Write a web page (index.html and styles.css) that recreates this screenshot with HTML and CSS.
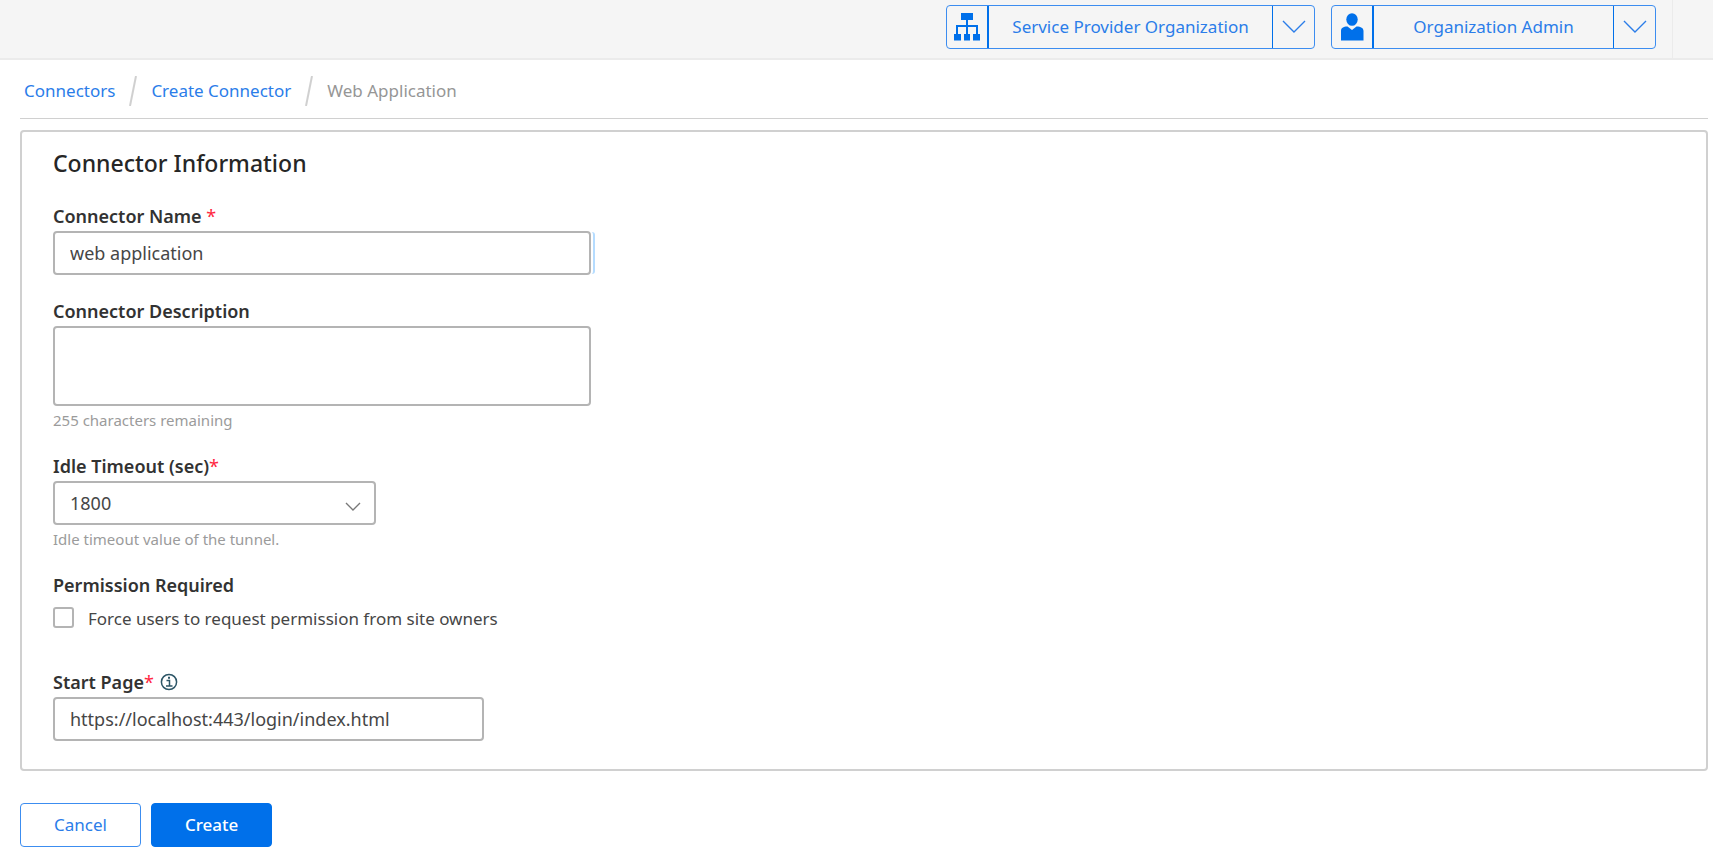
FILE: index.html
```
<!DOCTYPE html>
<html lang="en">
<head>
    <meta charset="UTF-8">
    <meta name="viewport" content="width=device-width, initial-scale=1.0">
    <title>Create Connector</title>
    <link rel="stylesheet" href="styles.css">
</head>
<body>
    <header class="topbar">
        <div class="switcher switcher-org">
            <span class="switcher-icon">
                <svg width="26" height="28" viewBox="0 0 26 28" fill="currentColor" aria-hidden="true">
                    <path d="M7 0h12v7h-5v5h10v9h2v6.500h-7v-6.500h3v-7h-8v7h2v6.500h-6v-6.500h2v-7H4v7h3v6.500H0v-6.500h2v-9h10V7H7z"/>
                </svg>
            </span>
            <button type="button" class="switcher-name">Service Provider Organization</button>
            <button type="button" class="switcher-toggle" aria-label="Change organization">
                <svg width="24" height="14" viewBox="0 0 24 14" fill="none" stroke="currentColor" stroke-width="1.4" aria-hidden="true"><path d="M1 1l11 11L23 1"/></svg>
            </button>
        </div>
        <div class="switcher switcher-role">
            <span class="switcher-icon">
                <svg width="24" height="28" viewBox="0 0 24 28" fill="currentColor" aria-hidden="true">
                    <ellipse cx="12" cy="6.500" rx="5.700" ry="6.300"/>
                    <path d="M1 27.500V18c0-3 2-4.500 6.500-4.500L12 17l4.500-3.500C21 13.500 23.500 15 23.500 18v9.500z"/>
                </svg>
            </span>
            <button type="button" class="switcher-name">Organization Admin</button>
            <button type="button" class="switcher-toggle" aria-label="Change role">
                <svg width="24" height="14" viewBox="0 0 24 14" fill="none" stroke="currentColor" stroke-width="1.4" aria-hidden="true"><path d="M1 1l11 11L23 1"/></svg>
            </button>
        </div>
        <div class="topbar-end"></div>
    </header>

    <main class="page">
        <nav class="breadcrumb" aria-label="Breadcrumb">
            <a href="#">Connectors</a>
            <svg class="slash" width="8" height="30" viewBox="0 0 8 30" aria-hidden="true"><path d="M7 0L1 30"/></svg>
            <a href="#">Create Connector</a>
            <svg class="slash" width="8" height="30" viewBox="0 0 8 30" aria-hidden="true"><path d="M7 0L1 30"/></svg>
            <span>Web Application</span>
        </nav>

        <form>
            <section class="card">
                <h2>Connector Information</h2>

                <div class="field">
                    <label for="name">Connector Name <span class="required">*</span></label>
                    <input type="text" id="name" class="control wide edited" value="web application">
                </div>

                <div class="field">
                    <label for="description">Connector Description</label>
                    <textarea id="description" class="control wide"></textarea>
                    <p class="hint">255 characters remaining</p>
                </div>

                <div class="field">
                    <label for="timeout">Idle Timeout (sec)<span class="required">*</span></label>
                    <div class="select">
                        <select id="timeout" class="control">
                            <option>1800</option>
                        </select>
                        <svg width="16" height="10" viewBox="0 0 16 10" fill="none" stroke="currentColor" stroke-width="1.4" aria-hidden="true"><path d="M1 1l7 7 7-7"/></svg>
                    </div>
                    <p class="hint">Idle timeout value of the tunnel.</p>
                </div>

                <div class="field">
                    <div class="label">Permission Required</div>
                    <div class="check">
                        <input type="checkbox" id="permission">
                        <label for="permission">Force users to request permission from site owners</label>
                    </div>
                </div>

                <div class="field">
                    <div class="label-row">
                        <label for="start">Start Page<span class="required">*</span></label>
                        <svg class="info" width="18" height="18" viewBox="0 0 18 18" fill="none" stroke="currentColor" aria-hidden="true">
                            <circle cx="9" cy="9" r="7.600" stroke-width="1.500"/>
                            <path d="M6.500 7.500H9.500V13M6 13h6.500" stroke-width="1.500"/>
                            <path d="M8 4.700h2" stroke-width="2"/>
                        </svg>
                    </div>
                    <input type="text" id="start" class="control medium" value="https://localhost:443/login/index.html">
                </div>
            </section>

            <div class="actions">
                <button type="button" class="btn">Cancel</button>
                <button type="submit" class="btn btn-primary">Create</button>
            </div>
        </form>
    </main>
</body>
</html>
```
FILE: styles.css
```
* {
    box-sizing: border-box;
}
body {
    margin: 0;
    background: #fff;
    color: #464646;
    font-family: "Noto Sans", "Open Sans", sans-serif;
    font-size: 17px;
    line-height: 24px;
}
button, input, select, textarea {
    font: inherit;
    color: inherit;
}

/* top bar */
.topbar {
    display: flex;
    justify-content: flex-end;
    align-items: flex-start;
    gap: 16px;
    height: 60px;
    background: #f5f5f5;
    border-bottom: 2px solid #ebebeb;
}
.switcher {
    display: flex;
    height: 44px;
    margin-top: 5px;
    border: 1px solid #3c8df0;
    border-radius: 4px;
    color: #0070ea;
}
.switcher-org {
    width: 369px;
}
.switcher-role {
    width: 325px;
}
.switcher-icon {
    display: flex;
    justify-content: center;
    align-items: center;
    width: 42px;
    border-right: 2px solid #0070ea;
}
.switcher button {
    padding: 0;
    border: 0;
    background: none;
    color: #2b7de9;
    cursor: pointer;
}
.switcher-name {
    flex: 1;
}
.switcher .switcher-toggle {
    width: 42px;
    border-left: 1px solid #0070ea;
}
.switcher-toggle svg {
    display: block;
    margin: 0 auto;
}
.topbar-end {
    align-self: stretch;
    width: 41px;
    border-left: 1px solid #ebebeb;
}

/* page */
.page {
    padding: 0 5px 5px 20px;
}
.breadcrumb {
    display: flex;
    align-items: center;
    gap: 14px;
    height: 59px;
    padding: 4px 4px 0;
    border-bottom: 1px solid #d0d0d0;
    color: #969696;
}
.breadcrumb a {
    color: #2b7de9;
    text-decoration: none;
}
.slash {
    fill: none;
    stroke: #d0d0d0;
    stroke-width: 2;
}
.card {
    margin-top: 11px;
    padding: 15px 31px 28px;
    border: 2px solid #d0d0d0;
    border-radius: 4px;
}
.card h2 {
    margin: 0 0 25px;
    color: #262626;
    font-size: 23px;
    font-weight: 500;
    line-height: 32px;
}

/* form fields */
.field + .field {
    margin-top: 24px;
}
.field > label,
.label,
.label-row {
    display: block;
    margin-bottom: 3px;
    color: #323232;
    font-size: 18px;
    font-weight: 600;
}
.label-row {
    display: flex;
    align-items: center;
    gap: 6px;
}
.required {
    color: #ff2640;
    font-weight: 400;
}
.info {
    color: #2c5566;
}
.control {
    display: block;
    height: 44px;
    padding: 0 15px;
    border: 2px solid #b4b4b4;
    border-radius: 4px;
    background: #fff;
    font-size: 18px;
}
.wide {
    width: 538px;
    max-width: 100%;
}
.medium {
    width: 431px;
    max-width: 100%;
}
.edited {
    box-shadow: 2px 0 0 #fff, 5px 0 0 -1px #b5dcff;
}
textarea.control {
    height: 80px;
    padding: 8px 15px;
    resize: none;
}
.select {
    position: relative;
    width: 323px;
    max-width: 100%;
}
.select select {
    appearance: none;
    width: 100%;
}
.select svg {
    position: absolute;
    right: 15px;
    top: 21px;
    color: #787878;
    pointer-events: none;
}
.hint {
    margin: 4px 0 0;
    color: #9b9b9b;
    font-size: 15px;
    line-height: 20px;
}
.check {
    display: flex;
    gap: 14px;
    padding: 7px 0 15px;
}
.check input {
    appearance: none;
    width: 21px;
    height: 21px;
    margin: 0;
    border: 2px solid #b4b4b4;
    border-radius: 3px;
}
.check input:checked {
    background: #0070ea;
}

/* buttons */
.actions {
    display: flex;
    gap: 10px;
    margin-top: 32px;
}
.btn {
    height: 44px;
    padding: 0 33px;
    border: 1px solid #3c8df0;
    border-radius: 4px;
    background: #fff;
    color: #2b7de9;
    cursor: pointer;
}
.btn-primary {
    border-color: #0070ea;
    background: #0070ea;
    color: #fff;
    font-weight: 500;
}
```
